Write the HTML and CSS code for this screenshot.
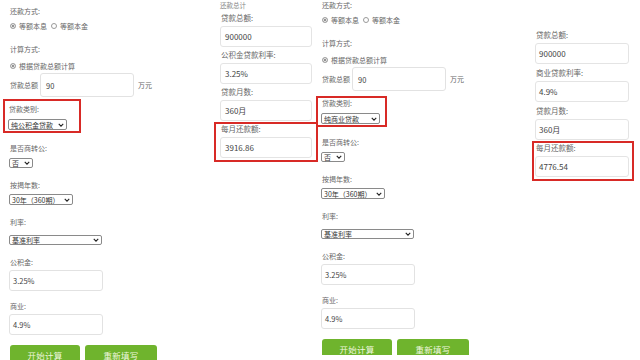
FILE: index.html
```html
<!DOCTYPE html>
<html lang="zh-CN">
<head>
    <meta charset="UTF-8">
    <meta name="viewport" content="width=device-width, initial-scale=1.0">
    <title>房贷计算器</title>
    <link rel="stylesheet" href="styles.css">
</head>
<body>
    <div class="collage">
        <!-- 公积金贷款 表单 -->
        <div class="form-panel">
            <div class="label">还款方式:</div>
            <div class="radios mt5">
                <span class="radio checked"></span><span class="radio-text">等额本息</span>
                <span class="radio"></span><span class="radio-text">等额本金</span>
            </div>
            <div class="label mt13">计算方式:</div>
            <div class="radios mt7">
                <span class="radio checked"></span><span class="radio-text">根据贷款总额计算</span>
            </div>
            <div class="amount-row mt2">
                <span class="amount-label">贷款总额</span>
                <div class="text-input amount-input">90</div>
                <span class="unit">万元</span>
            </div>
            <div class="type-box mt2">
                <div class="label">贷款类别:</div>
                <div class="select select-type mt5">纯公积金贷款
                    <svg class="chev" viewBox="0 0 8 5" width="6" height="4"><path d="M1 1l3 3 3-3" fill="none" stroke="#222" stroke-width="1.5"/></svg>
                </div>
            </div>
            <div class="label mt10">是否商转公:</div>
            <div class="select select-no mt5">否
                <svg class="chev" viewBox="0 0 8 5" width="6" height="4"><path d="M1 1l3 3 3-3" fill="none" stroke="#222" stroke-width="1.5"/></svg>
            </div>
            <div class="label mt12">按揭年数:</div>
            <div class="select select-years tall mt4">30年（360期）
                <svg class="chev" viewBox="0 0 8 5" width="6" height="4"><path d="M1 1l3 3 3-3" fill="none" stroke="#222" stroke-width="1.5"/></svg>
            </div>
            <div class="label mt12">利率:</div>
            <div class="select select-rate mt8">基准利率
                <svg class="chev" viewBox="0 0 8 5" width="6" height="4"><path d="M1 1l3 3 3-3" fill="none" stroke="#222" stroke-width="1.5"/></svg>
            </div>
            <div class="label mt12">公积金:</div>
            <div class="text-input rate-input mt3">3.25%</div>
            <div class="label mt10">商业:</div>
            <div class="text-input rate-input mt3">4.9%</div>
            <div class="buttons">
                <div class="btn">开始计算</div>
                <div class="btn wide">重新填写</div>
            </div>
        </div>

        <!-- 公积金贷款 结果 -->
        <div class="result-panel left">
            <div class="result-title">还款总计</div>
            <div class="result-label">贷款总额:</div>
            <div class="result-input">900000</div>
            <div class="result-label">公积金贷款利率:</div>
            <div class="result-input">3.25%</div>
            <div class="result-label">贷款月数:</div>
            <div class="result-input">360月</div>
            <div class="result-box">
                <div class="result-label">每月还款额:</div>
                <div class="result-input">3916.86</div>
            </div>
        </div>

        <!-- 商业贷款 表单 -->
        <div class="form-panel right">
            <div class="label">还款方式:</div>
            <div class="radios mt5">
                <span class="radio checked"></span><span class="radio-text">等额本息</span>
                <span class="radio"></span><span class="radio-text">等额本金</span>
            </div>
            <div class="label mt13">计算方式:</div>
            <div class="radios mt7">
                <span class="radio checked"></span><span class="radio-text">根据贷款总额计算</span>
            </div>
            <div class="amount-row mt2">
                <span class="amount-label">贷款总额</span>
                <div class="text-input amount-input">90</div>
                <span class="unit">万元</span>
            </div>
            <div class="type-box">
                <div class="label">贷款类别:</div>
                <div class="select select-type mt5">纯商业贷款
                    <svg class="chev" viewBox="0 0 8 5" width="6" height="4"><path d="M1 1l3 3 3-3" fill="none" stroke="#222" stroke-width="1.5"/></svg>
                </div>
            </div>
            <div class="label mt10">是否商转公:</div>
            <div class="select select-no mt5">否
                <svg class="chev" viewBox="0 0 8 5" width="6" height="4"><path d="M1 1l3 3 3-3" fill="none" stroke="#222" stroke-width="1.5"/></svg>
            </div>
            <div class="label mt12">按揭年数:</div>
            <div class="select select-years tall mt4">30年（360期）
                <svg class="chev" viewBox="0 0 8 5" width="6" height="4"><path d="M1 1l3 3 3-3" fill="none" stroke="#222" stroke-width="1.5"/></svg>
            </div>
            <div class="label mt12">利率:</div>
            <div class="select select-rate mt8">基准利率
                <svg class="chev" viewBox="0 0 8 5" width="6" height="4"><path d="M1 1l3 3 3-3" fill="none" stroke="#222" stroke-width="1.5"/></svg>
            </div>
            <div class="label mt12">公积金:</div>
            <div class="text-input rate-input mt3">3.25%</div>
            <div class="label mt10">商业:</div>
            <div class="text-input rate-input mt3">4.9%</div>
            <div class="buttons">
                <div class="btn">开始计算</div>
                <div class="btn wide">重新填写</div>
            </div>
        </div>

        <!-- 商业贷款 结果 -->
        <div class="result-panel right">
            <div class="result-label">贷款总额:</div>
            <div class="result-input">900000</div>
            <div class="result-label">商业贷款利率:</div>
            <div class="result-input">4.9%</div>
            <div class="result-label">贷款月数:</div>
            <div class="result-input">360月</div>
            <div class="result-box">
                <div class="result-label">每月还款额:</div>
                <div class="result-input">4776.54</div>
            </div>
        </div>
    </div>
</body>
</html>
```

FILE: styles.css
```css
* {
    margin: 0;
    padding: 0;
    box-sizing: border-box;
}

body {
    width: 640px;
    height: 360px;
    overflow: hidden;
    background: #ffffff;
    font-family: 'Noto Sans CJK SC', 'Noto Sans', sans-serif;
    color: #666666;
}

.collage {
    display: flex;
    height: 360px;
}

/* 表单部分 */
.form-panel {
    width: 210px;
    flex-shrink: 0;
    padding: 6px 0 0 10px;
}

.form-panel.right {
    width: 174px;
    padding: 0 0 0 6px;
}

.label {
    height: 10px;
    line-height: 10px;
    font-size: 7px;
    color: #666666;
    white-space: nowrap;
}

.radios {
    height: 10px;
    display: flex;
    align-items: center;
    font-size: 7px;
    color: #666666;
}

.radio {
    width: 6px;
    height: 6px;
    border: 1px solid #9a9a9a;
    border-radius: 50%;
    background: #ffffff;
    margin-right: 3px;
    flex-shrink: 0;
}

.radio.checked {
    border-color: #aaaaaa;
    background: #707070;
    box-shadow: inset 0 0 0 1px #ffffff;
}

.radio-text {
    margin-right: 4px;
    line-height: 10px;
}

.amount-row {
    height: 24px;
    display: flex;
    align-items: center;
    font-size: 7px;
}

.amount-label {
    width: 30px;
}

.text-input {
    background: #ffffff;
    border: 1px solid #e2e2e2;
    border-radius: 3px;
    font-size: 7.5px;
    color: #444444;
    display: flex;
    align-items: center;
}

.amount-input {
    width: 94px;
    height: 24px;
    padding-left: 5px;
}

.unit {
    margin-left: 4px;
}

.type-box {
    width: 78px;
    margin-left: -7px;
    border: 2px solid #d82a26;
    padding: 3px 4px 1px;
}

.form-panel.right .type-box {
    width: 71px;
    margin-top: 5px;
    margin-left: -6px;
    padding-top: 0;
}

.select {
    height: 10px;
    border: 1px solid #8a8a8a;
    border-radius: 2px;
    background: #ffffff;
    font-size: 7px;
    color: #333333;
    display: flex;
    align-items: center;
    justify-content: space-between;
    padding: 0 2px 0 2px;
    white-space: nowrap;
    margin-left: -1px;
}

.select.tall {
    height: 11px;
}

.select-type {
    width: 59px;
    height: 11px;
}

.select-no {
    width: 24px;
}

.select-years {
    width: 64px;
}

.select-rate {
    width: 93px;
}

.chev {
    flex-shrink: 0;
}

.rate-input {
    width: 94px;
    height: 21px;
    margin-left: -1px;
    padding-left: 3px;
}

.buttons {
    display: flex;
    gap: 5px;
    margin-top: 10px;
}

.btn {
    width: 70px;
    height: 16px;
    background: #6fb42d;
    border-radius: 3px 3px 0 0;
    color: #eef7df;
    font-size: 8.5px;
    line-height: 9px;
    padding-top: 6px;
    text-align: center;
    letter-spacing: 0.3px;
}

.btn.wide {
    width: 72px;
}

/* 结果部分 */
.result-panel {
    width: 106px;
    flex-shrink: 0;
    padding: 0 0 0 10px;
}

.result-panel.right {
    width: 150px;
    padding: 30px 0 0 45px;
}

.result-title {
    height: 10px;
    line-height: 10px;
    font-size: 6.5px;
    color: #888888;
}

.result-label {
    height: 10px;
    line-height: 10px;
    font-size: 7.5px;
    color: #666666;
    margin-top: 4px;
    padding-left: 1px;
    white-space: nowrap;
}

.result-panel.left .result-label {
    margin-top: 3px;
}

.result-title + .result-label,
.result-panel.right .result-label:first-child {
    margin-top: 0;
}

.result-input {
    width: 92px;
    height: 21px;
    margin-top: 3px;
    background: #ffffff;
    border: 1px solid #e4e4e4;
    border-radius: 3px;
    font-size: 8px;
    color: #444444;
    display: flex;
    align-items: center;
    padding-left: 4px;
}

.result-panel.right .result-input {
    width: 94px;
    padding-left: 3px;
}

.result-box {
    width: 104px;
    margin-top: 1px;
    margin-left: -6px;
    border: 2px solid #d82a26;
    padding: 0 4px 2px;
}

.result-panel .result-box .result-label {
    margin-top: 0;
}

.result-panel.right .result-box {
    width: 102px;
    margin-left: -3px;
    padding: 0 1px 2px;
}

/* 间距 */
.mt2 { margin-top: 2px; }
.mt3 { margin-top: 3px; }
.mt4 { margin-top: 4px; }
.mt5 { margin-top: 5px; }
.mt7 { margin-top: 7px; }
.mt8 { margin-top: 8px; }
.mt10 { margin-top: 10px; }
.mt12 { margin-top: 12px; }
.mt13 { margin-top: 13px; }
```
